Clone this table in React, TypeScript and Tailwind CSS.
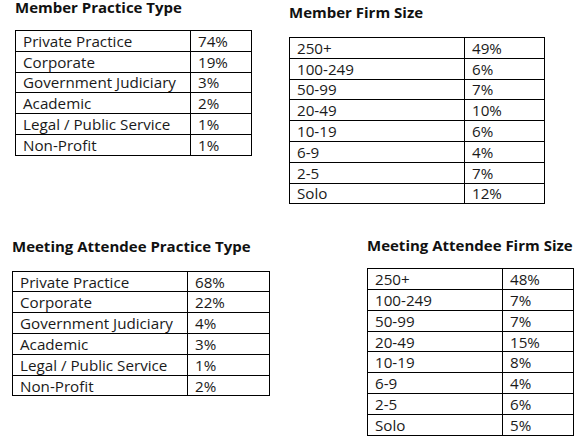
import React from "react";

type Row = [string, string];

interface StatTableProps {
  title: string;
  rows: Row[];
  col1: string;
  col2: string;
  gap: string;
}

const memberPractice: Row[] = [
  ["Private Practice", "74%"],
  ["Corporate", "19%"],
  ["Government Judiciary", "3%"],
  ["Academic", "2%"],
  ["Legal / Public Service", "1%"],
  ["Non-Profit", "1%"],
];

const memberFirm: Row[] = [
  ["250+", "49%"],
  ["100-249", "6%"],
  ["50-99", "7%"],
  ["20-49", "10%"],
  ["10-19", "6%"],
  ["6-9", "4%"],
  ["2-5", "7%"],
  ["Solo", "12%"],
];

const attendeePractice: Row[] = [
  ["Private Practice", "68%"],
  ["Corporate", "22%"],
  ["Government Judiciary", "4%"],
  ["Academic", "3%"],
  ["Legal / Public Service", "1%"],
  ["Non-Profit", "2%"],
];

const attendeeFirm: Row[] = [
  ["250+", "48%"],
  ["100-249", "7%"],
  ["50-99", "7%"],
  ["20-49", "15%"],
  ["10-19", "8%"],
  ["6-9", "4%"],
  ["2-5", "6%"],
  ["Solo", "5%"],
];

function StatTable({ title, rows, col1, col2, gap }: StatTableProps) {
  return (
    <div>
      <h2 className="text-[15px] leading-[14px] font-bold text-[#111] whitespace-nowrap">
        {title}
      </h2>
      <table className={`border-collapse ${gap}`}>
        <tbody>
          {rows.map(([label, pct]) => (
            <tr key={label} className="h-[20.8px]">
              <td className={`${col1} border border-black px-[7px] py-0 text-[15.2px] leading-[18px] whitespace-nowrap`}>
                {label}
              </td>
              <td className={`${col2} border border-black px-[7px] py-0 text-[15.2px] leading-[18px]`}>
                {pct}
              </td>
            </tr>
          ))}
        </tbody>
      </table>
    </div>
  );
}

export default function App() {
  return (
    <div className="w-[584px] h-[443px] overflow-hidden bg-white text-[#1a1a1a] font-['Open_Sans',sans-serif]">
      {/* Top row */}
      <div className="flex items-start h-[236px]">
        <div className="ml-[15px]">
          <StatTable
            title="Member Practice Type"
            rows={memberPractice}
            col1="w-[175px]"
            col2="w-[61px]"
            gap="mt-[16px]"
          />
        </div>
        <div className="ml-[37px] mt-[5px]">
          <StatTable
            title="Member Firm Size"
            rows={memberFirm}
            col1="w-[175px]"
            col2="w-[80px]"
            gap="mt-[18px]"
          />
        </div>
      </div>

      {/* Bottom row */}
      <div className="flex items-start">
        <div className="ml-[12px] mt-[3px]">
          <StatTable
            title="Meeting Attendee Practice Type"
            rows={attendeePractice}
            col1="w-[175px]"
            col2="w-[82px]"
            gap="mt-[17.7px]"
          />
        </div>
        <div className="ml-[97px] mt-[2px]">
          <StatTable
            title="Meeting Attendee Firm Size"
            rows={attendeeFirm}
            col1="w-[135px]"
            col2="w-[71px]"
            gap="mt-[16.3px]"
          />
        </div>
      </div>
    </div>
  );
}
